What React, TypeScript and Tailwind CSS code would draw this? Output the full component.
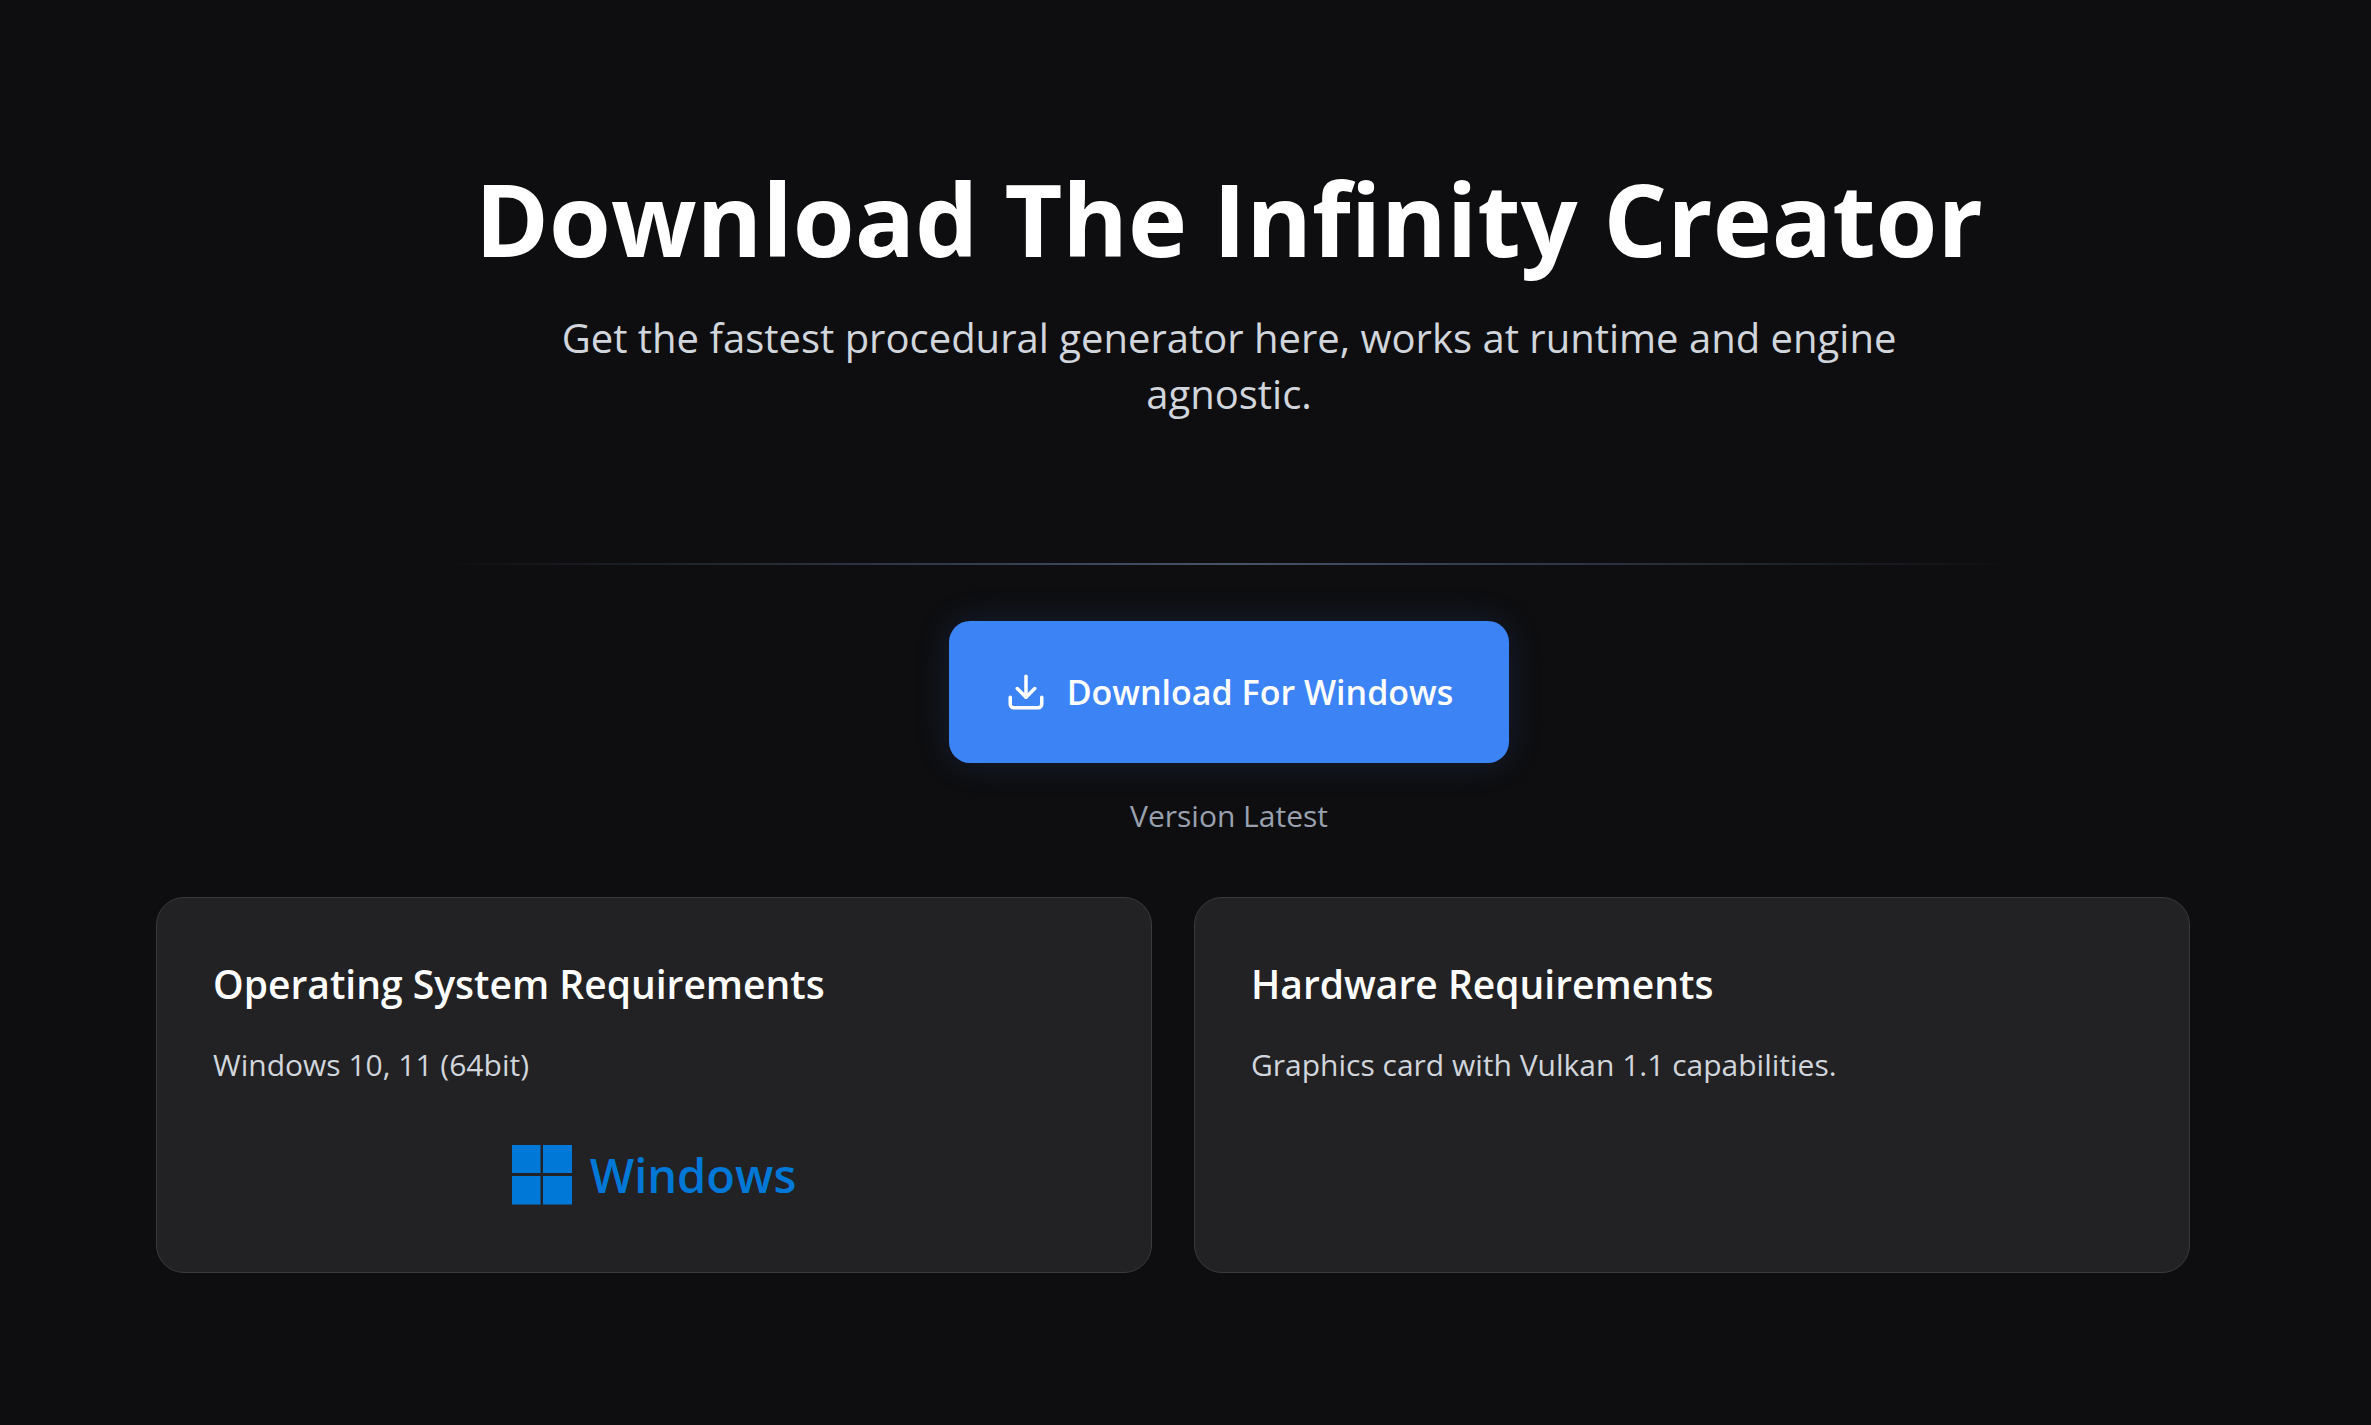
import { Download } from "lucide-react";
import type { ReactNode } from "react";

type RequirementCardProps = {
  title: string;
  description: string;
  children?: ReactNode;
};

function WindowsLogo() {
  return (
    <div className="mt-[55px] flex items-center justify-center gap-[18px] text-[#0078d7]">
      <svg viewBox="0 0 60 60" className="size-[60px]" fill="currentColor" aria-hidden="true">
        <path d="M0 0h28.5v28H0zM31 0h29v28H31zM0 31h28.5v28.5H0zM31 31h29v28.5H31z" />
      </svg>
      <span className="text-[47px] leading-[60px] font-semibold">Windows</span>
    </div>
  );
}

function RequirementCard({ title, description, children }: RequirementCardProps) {
  return (
    <div className="rounded-[28px] border border-[#3a3a3c] bg-[#222224] px-14 pt-[58px] pb-[67px]">
      <h2 className="text-[39px] leading-[56px] font-semibold text-white">{title}</h2>
      <p className="mt-7 text-[30px] leading-[50px] text-gray-300">{description}</p>
      {children}
    </div>
  );
}

export default function App() {
  return (
    <main className="min-h-screen bg-[#0e0e10] pt-[166px] pr-[69px] pb-10 pl-[156px] font-['Open_Sans',sans-serif]">
      <header className="text-center">
        <h1 className="text-[100px] leading-[104px] font-bold text-white">
          Download The Infinity Creator
        </h1>
        <p className="mx-auto mt-10 max-w-[1344px] text-[40px] leading-[56px] text-gray-300">
          Get the fastest procedural generator here, works at runtime and engine agnostic.
        </p>
      </header>

      <div className="mx-auto mt-[141px] h-0.5 max-w-[1568px] bg-linear-to-r from-transparent via-slate-600 to-transparent" />

      {/* Download */}
      <section className="mt-14 flex flex-col items-center">
        <button
          type="button"
          className="flex h-[142px] items-center gap-5 rounded-[21px] bg-[#3c83f6] px-14 text-[34px] leading-[50px] font-semibold text-white shadow-[0_0_35px_rgba(59,130,246,0.15)]"
        >
          <Download className="size-[42px]" />
          Download For Windows
        </button>
        <p className="mt-7 text-[30px] leading-[50px] text-gray-400">Version Latest</p>
      </section>

      {/* Requirements */}
      <section className="mt-14 mr-28 grid grid-cols-2 gap-[42px]">
        <RequirementCard
          title="Operating System Requirements"
          description="Windows 10, 11 (64bit)"
        >
          <WindowsLogo />
        </RequirementCard>
        <RequirementCard
          title="Hardware Requirements"
          description="Graphics card with Vulkan 1.1 capabilities."
        />
      </section>
    </main>
  );
}
